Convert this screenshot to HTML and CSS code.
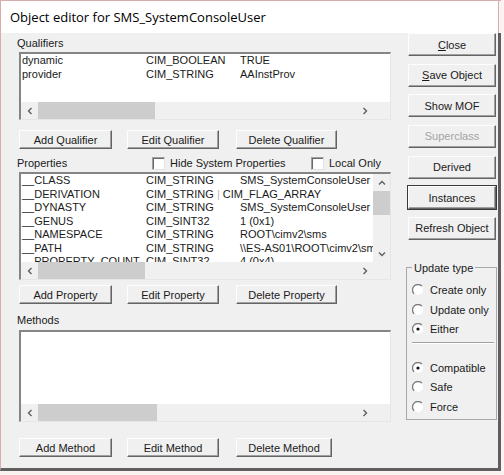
FILE: index.html
```html
<!DOCTYPE html>
<html>
<head>
<meta charset="utf-8">
<title>Object editor for SMS_SystemConsoleUser</title>
<link rel="stylesheet" href="styles.css">
</head>
<body>
<div class="window">
  <div class="titlebar">Object editor for SMS_SystemConsoleUser</div>
  <div class="client">
    <div class="main">
      <div class="label">Qualifiers</div>
      <div class="list list-q">
        <div class="rows rows-wide">
          <div class="row"><span class="c1">dynamic</span><span class="c2">CIM_BOOLEAN</span><span class="c3">TRUE</span></div>
          <div class="row"><span class="c1">provider</span><span class="c2">CIM_STRING</span><span class="c3">AAInstProv</span></div>
        </div>
        <div class="hscroll">
          <span class="arr"><svg width="8" height="8" viewBox="0 0 8 8"><polyline points="5.5,1 2.5,4 5.5,7" fill="none" stroke="#606060" stroke-width="1.4"/></svg></span>
          <span class="thumb thumb-q"></span>
          <span class="fill"></span>
          <span class="arr"><svg width="8" height="8" viewBox="0 0 8 8"><polyline points="2.5,1 5.5,4 2.5,7" fill="none" stroke="#606060" stroke-width="1.4"/></svg></span>
        </div>
        <div class="corner"></div>
      </div>
      <div class="btnrow btnrow-top">
        <button class="btn btn-add">Add Qualifier</button>
        <button class="btn btn-edit">Edit Qualifier</button>
        <button class="btn btn-del">Delete Qualifier</button>
      </div>

      <div class="phead">
        <div class="label plabel">Properties</div>
        <div class="chk chk1"><span class="box"></span>Hide System Properties</div>
        <div class="chk"><span class="box"></span>Local Only</div>
      </div>
      <div class="list list-p">
        <div class="rows">
          <div class="row"><span class="c1">__CLASS</span><span class="c2">CIM_STRING</span><span class="c3">SMS_SystemConsoleUser</span></div>
          <div class="row"><span class="c1">__DERIVATION</span><span class="c2">CIM_STRING <span class="pipe">|</span> CIM_FLAG_ARRAY</span><span class="c3"></span></div>
          <div class="row"><span class="c1">__DYNASTY</span><span class="c2">CIM_STRING</span><span class="c3">SMS_SystemConsoleUser</span></div>
          <div class="row"><span class="c1">__GENUS</span><span class="c2">CIM_SINT32</span><span class="c3">1 (0x1)</span></div>
          <div class="row"><span class="c1">__NAMESPACE</span><span class="c2">CIM_STRING</span><span class="c3">ROOT\cimv2\sms</span></div>
          <div class="row"><span class="c1">__PATH</span><span class="c2">CIM_STRING</span><span class="c3">\\ES-AS01\ROOT\cimv2\sms:SMS_SystemConsoleUser</span></div>
          <div class="row"><span class="c1">__PROPERTY_COUNT</span><span class="c2">CIM_SINT32</span><span class="c3">4 (0x4)</span></div>
        </div>
        <div class="vscroll">
          <span class="varr"><svg width="8" height="8" viewBox="0 0 8 8"><polyline points="1,5.5 4,2.5 7,5.5" fill="none" stroke="#606060" stroke-width="1.4"/></svg></span>
          <span class="vthumb"></span>
          <span class="fill"></span>
          <span class="varr"><svg width="8" height="8" viewBox="0 0 8 8"><polyline points="1,2.5 4,5.5 7,2.5" fill="none" stroke="#606060" stroke-width="1.4"/></svg></span>
        </div>
        <div class="hscroll">
          <span class="arr"><svg width="8" height="8" viewBox="0 0 8 8"><polyline points="5.5,1 2.5,4 5.5,7" fill="none" stroke="#606060" stroke-width="1.4"/></svg></span>
          <span class="thumb thumb-p"></span>
          <span class="fill"></span>
          <span class="arr"><svg width="8" height="8" viewBox="0 0 8 8"><polyline points="2.5,1 5.5,4 2.5,7" fill="none" stroke="#606060" stroke-width="1.4"/></svg></span>
        </div>
        <div class="corner"></div>
      </div>
      <div class="btnrow btnrow-mid">
        <button class="btn btn-add">Add Property</button>
        <button class="btn btn-edit">Edit Property</button>
        <button class="btn btn-del">Delete Property</button>
      </div>

      <div class="label mlabel">Methods</div>
      <div class="list list-m">
        <div class="rows rows-wide"></div>
        <div class="hscroll">
          <span class="arr"><svg width="8" height="8" viewBox="0 0 8 8"><polyline points="5.5,1 2.5,4 5.5,7" fill="none" stroke="#606060" stroke-width="1.4"/></svg></span>
          <span class="thumb thumb-m"></span>
          <span class="fill"></span>
          <span class="arr"><svg width="8" height="8" viewBox="0 0 8 8"><polyline points="2.5,1 5.5,4 2.5,7" fill="none" stroke="#606060" stroke-width="1.4"/></svg></span>
        </div>
        <div class="corner"></div>
      </div>
      <div class="btnrow btnrow-bot">
        <button class="btn btn-add">Add Method</button>
        <button class="btn btn-edit">Edit Method</button>
        <button class="btn btn-del btn-delm">Delete Method</button>
      </div>
    </div>

    <div class="side">
      <button class="btn sbtn"><span class="u">C</span>lose</button>
      <button class="btn sbtn"><span class="u">S</span>ave Object</button>
      <button class="btn sbtn">Show MOF</button>
      <button class="btn sbtn disabled">Superclass</button>
      <button class="btn sbtn">Derived</button>
      <button class="btn sbtn default">Instances</button>
      <button class="btn sbtn">Refresh Object</button>

      <fieldset class="group">
        <legend>Update type</legend>
        <div class="radio"><svg width="12" height="12" viewBox="0 0 12 12"><circle cx="6" cy="6" r="5" fill="#fff"/><path d="M2.1 9.9A5.5 5.5 0 0 1 9.9 2.1" fill="none" stroke="#7c7c7c" stroke-width="1.3"/></svg>Create only</div>
        <div class="radio"><svg width="12" height="12" viewBox="0 0 12 12"><circle cx="6" cy="6" r="5" fill="#fff"/><path d="M2.1 9.9A5.5 5.5 0 0 1 9.9 2.1" fill="none" stroke="#7c7c7c" stroke-width="1.3"/></svg>Update only</div>
        <div class="radio"><svg width="12" height="12" viewBox="0 0 12 12"><circle cx="6" cy="6" r="5" fill="#fff"/><path d="M2.1 9.9A5.5 5.5 0 0 1 9.9 2.1" fill="none" stroke="#7c7c7c" stroke-width="1.3"/><circle cx="6" cy="6" r="1.6" fill="#111"/></svg>Either</div>
        <div class="gsep"></div>
        <div class="radio"><svg width="12" height="12" viewBox="0 0 12 12"><circle cx="6" cy="6" r="5" fill="#fff"/><path d="M2.1 9.9A5.5 5.5 0 0 1 9.9 2.1" fill="none" stroke="#7c7c7c" stroke-width="1.3"/><circle cx="6" cy="6" r="1.6" fill="#111"/></svg>Compatible</div>
        <div class="radio"><svg width="12" height="12" viewBox="0 0 12 12"><circle cx="6" cy="6" r="5" fill="#fff"/><path d="M2.1 9.9A5.5 5.5 0 0 1 9.9 2.1" fill="none" stroke="#7c7c7c" stroke-width="1.3"/></svg>Safe</div>
        <div class="radio"><svg width="12" height="12" viewBox="0 0 12 12"><circle cx="6" cy="6" r="5" fill="#fff"/><path d="M2.1 9.9A5.5 5.5 0 0 1 9.9 2.1" fill="none" stroke="#7c7c7c" stroke-width="1.3"/></svg>Force</div>
      </fieldset>
    </div>
  </div>
</div>
</body>
</html>
```

FILE: styles.css
```css
* { box-sizing: border-box; }
html, body { margin: 0; padding: 0; }
body {
  width: 504px;
  height: 475px;
  overflow: hidden;
  background: #fbf2f2;
  font-family: "Liberation Sans", Arial, sans-serif;
  font-size: 11px;
  color: #1a1a1a;
}
.window {
  width: 501px;
  height: 471px;
  border-left: 1px solid #d9adad;
  border-top: 1px solid #d9adad;
  border-bottom: 3px solid #5e5e5e;
  display: flex;
  flex-direction: column;
}
.titlebar {
  height: 32px;
  line-height: 32px;
  margin-right: 2px;
  background: #fff;
  border-right: 1px solid #d9adad;
  padding-left: 9px;
  font-family: "Open Sans", sans-serif;
  font-size: 13px;
  color: #000;
  white-space: nowrap;
}
.client {
  flex: 1;
  display: flex;
  padding-left: 16px;
  background: #f0f0f0;
  border-right: 3px solid #5e5e5e;
}
.main {
  width: 375px;
  padding-top: 3px;
}
.label {
  height: 15px;
  line-height: 15px;
  margin-bottom: 1px;
}
.list {
  margin-left: 2px;
  width: 372px;
  background: #fff;
  border-style: solid;
  border-width: 2px 1px 1px 2px;
  border-color: #858585 #e6e6e6 #e6e6e6 #858585;
  display: grid;
  grid-template-columns: 1fr 17px;
  grid-template-rows: 1fr 17px;
}
.list-q { height: 68px; }
.list-p { height: 108px; }
.list-m { height: 92px; }
.rows {
  overflow: hidden;
  min-width: 0;
  min-height: 0;
}
.rows-wide { grid-column: 1 / 3; }
.row {
  display: flex;
  height: 13.5px;
  line-height: 13.5px;
  padding-left: 1px;
  white-space: nowrap;
}
.c1 { width: 124px; flex: none; }
.c2 { width: 94px; flex: none; }
.c3 { flex: none; }
.pipe { color: #b8b8b8; }
.hscroll {
  grid-column: 1;
  grid-row: 2;
  display: flex;
  background: #f0f0f0;
}
.corner { grid-column: 2; grid-row: 2; background: #f0f0f0; }
.arr {
  width: 17px;
  flex: none;
  display: flex;
  align-items: center;
  justify-content: center;
}
.thumb { background: #cdcdcd; flex: none; }
.thumb-q { width: 117px; }
.thumb-p { width: 107px; }
.thumb-m { width: 119px; }
.fill { flex: 1; }
.vscroll {
  grid-column: 2;
  grid-row: 1;
  display: flex;
  flex-direction: column;
  background: #f0f0f0;
}
.varr {
  height: 17px;
  flex: none;
  display: flex;
  align-items: center;
  justify-content: center;
}
.vthumb { height: 24px; background: #cdcdcd; flex: none; }

.btnrow {
  display: flex;
  padding-left: 2px;
}
.btnrow-top { margin-top: 10px; }
.btnrow-mid { margin-top: 5px; }
.btnrow-bot { margin-top: 16px; }
.btn {
  height: 19px;
  padding: 0;
  margin: 0;
  font: inherit;
  color: #1a1a1a;
  background: #f0f0f0;
  border: 1px solid;
  border-color: #fdfdfd #646464 #646464 #fdfdfd;
  box-shadow: inset -1px -1px 0 #a0a0a0;
  display: flex;
  align-items: center;
  justify-content: center;
  white-space: nowrap;
}
.btn-add { width: 93px; margin-right: 15px; }
.btn-edit { width: 92px; margin-right: 17px; }
.btn-del { width: 101px; }
.btn-delm { width: 96px; }

.phead {
  display: flex;
  align-items: center;
  height: 18px;
  margin-top: 5px;
}
.plabel { width: 135px; margin-bottom: 0; }
.chk { display: flex; align-items: center; }
.chk1 { width: 159px; }
.box {
  width: 13px;
  height: 13px;
  margin-right: 5px;
  background: #fff;
  border-style: solid;
  border-width: 1px;
  border-color: #a0a0a0 #e3e3e3 #e3e3e3 #a0a0a0;
  box-shadow: inset 1px 1px 0 #696969;
}
.mlabel { margin-top: 9px; margin-bottom: 2px; }

.side {
  width: 91px;
  margin-left: 14px;
  display: flex;
  flex-direction: column;
}
.sbtn {
  width: 88px;
  height: 23px;
  margin-left: 2px;
  margin-bottom: 7.67px;
}
.u { text-decoration: underline; }
.disabled { color: #a3a3a3; }
.default { outline: 1px solid #3a3a3a; }

.group {
  margin: 13px 0 0 0;
  padding: 6px 0 2px 5px;
  border: 1px solid #a9a9a9;
  min-width: 0;
}
.group legend {
  padding: 0 2px;
  line-height: 14px;
}
.radio {
  display: flex;
  align-items: center;
  height: 19.5px;
  white-space: nowrap;
}
.radio svg { margin-right: 6px; flex: none; }
.gsep {
  height: 2px;
  border-top: 1px solid #a0a0a0;
  border-bottom: 1px solid #fff;
  margin: 3px 2px 14px 0;
}
```
